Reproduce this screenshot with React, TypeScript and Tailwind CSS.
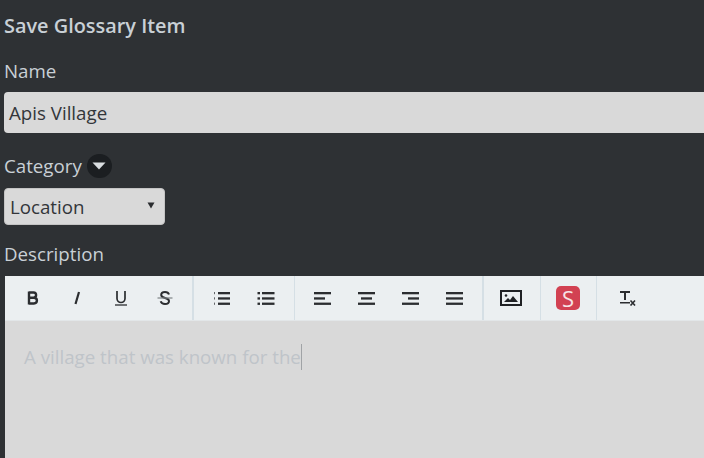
const font = "font-['Open_Sans',sans-serif]";

function Bars({ rows }: { rows: [number, number][] }) {
  return (
    <svg width="18" height="14" viewBox="0 0 18 14" fill="#2b2d30">
      {rows.map(([x, w], i) => (
        <rect key={i} x={x} y={1 + i * 5.3} width={w} height="2.3" />
      ))}
    </svg>
  );
}

function Tool({ children }: { children: React.ReactNode }) {
  return <div className="flex h-[44px] w-[44px] shrink-0 items-center justify-center">{children}</div>;
}

function Group({ children, className }: { children: React.ReactNode; className: string }) {
  return <div className={`flex h-[44px] shrink-0 border-[#d5dfe5] ${className}`}>{children}</div>;
}

export default function App() {
  return (
    <div className={`${font} h-[458px] w-[704px] overflow-hidden bg-[#2e3134] text-[#c9d0d6]`}>
      <div className="pl-1">
        <h1 className="pt-[13px] text-[19.9px] leading-[26px] font-semibold">Save Glossary Item</h1>

        <label className="mt-[19px] block text-[18.72px] leading-[26px]">Name</label>
        <div className="mt-[8px] flex h-[41px] w-[720px] items-center rounded-[4px] bg-[#d9d9d9] px-[5px] pt-[1px] text-[18.72px] text-[#33363a]">
          Apis Village
        </div>

        <div className="mt-[20px] flex h-[26px] items-center gap-[5px] text-[18.72px]">
          <span>Category</span>
          <span className="flex h-[24px] w-[25px] items-center justify-center rounded-full bg-[#1b1e21]">
            <svg width="14" height="8" viewBox="0 0 14 8" fill="#d9dde0">
              <path d="M0.5 0.5h13L7 7.5z" />
            </svg>
          </span>
        </div>
        <div className="mt-[9px] flex h-[37px] w-[161px] items-center justify-between rounded-[4px] border border-[#c4c4c4] bg-[#d9d9d9] pt-[1px] pr-[9px] pl-[5px] text-[18.72px] text-[#33363a]">
          <span>Location</span>
          <svg width="8" height="7" viewBox="0 0 8 7" fill="#2b2d30" className="mb-[3px]">
            <path d="M0.5 0.5h7L4 6.5z" />
          </svg>
        </div>

        <label className="mt-[16px] block text-[18.72px] leading-[26px]">Description</label>
      </div>

      <div className="mt-[9px] ml-[5px] w-[720px]">
        <div className="flex h-[45px] border-b border-[#e2e6e8] bg-[#ebeff1]">
          <Group className="border-r-2 pr-[5px] pl-[6px]">
            <Tool>
              <svg width="14" height="16" viewBox="0 0 14 16" fill="none" stroke="#2b2d30" strokeWidth="2.4">
                <path d="M3 1.5v13M3 2.5h4.5a2.6 2.6 0 0 1 0 5.2H3M3 7.7h5a2.9 2.9 0 0 1 0 5.8H3" />
              </svg>
            </Tool>
            <Tool>
              <svg width="14" height="16" viewBox="0 0 14 16" fill="none" stroke="#2b2d30" strokeWidth="2.2">
                <path d="M9 2L5.5 14" />
              </svg>
            </Tool>
            <Tool>
              <svg width="14" height="16" viewBox="0 0 14 16" fill="none" stroke="#2b2d30">
                <path d="M3 1v7.5a4 4 0 0 0 8 0V1" strokeWidth="1.7" />
                <path d="M1 15h12" strokeWidth="1.3" />
              </svg>
            </Tool>
            <Tool>
              <svg width="16" height="16" viewBox="0 0 16 16" fill="none">
                <path d="M12 4.5C11.5 3 10 2 8 2 5.8 2 4.2 3.2 4.2 5 4.2 9 12 7 12 11c0 1.8-1.7 3-4 3-2.2 0-3.8-1-4.3-2.7" stroke="#2b2d30" strokeWidth="2" />
                <path d="M0.5 8h15" stroke="#7d8285" strokeWidth="1.2" />
              </svg>
            </Tool>
          </Group>
          <Group className="border-r pr-[6px] pl-[6px]">
            <Tool>
              <svg width="18" height="14" viewBox="0 0 18 14" fill="#2b2d30">
                <rect x="1" y="1" width="1" height="2.2" opacity="0.7" />
                <rect x="1" y="6.3" width="1" height="2.2" opacity="0.7" />
                <rect x="1" y="11.6" width="1" height="2.2" opacity="0.7" />
                <rect x="5" y="1" width="12" height="2.3" />
                <rect x="5" y="6.3" width="12" height="2.3" />
                <rect x="5" y="11.6" width="12" height="2.3" />
              </svg>
            </Tool>
            <Tool>
              <svg width="18" height="14" viewBox="0 0 18 14" fill="#2b2d30">
                <rect x="0.5" y="1" width="2.5" height="2.3" />
                <rect x="0.5" y="6.3" width="2.5" height="2.3" />
                <rect x="0.5" y="11.6" width="2.5" height="2.3" />
                <rect x="5" y="1" width="12.5" height="2.3" />
                <rect x="5" y="6.3" width="12.5" height="2.3" />
                <rect x="5" y="11.6" width="12.5" height="2.3" />
              </svg>
            </Tool>
          </Group>
          <Group className="border-r-2 pr-[5px] pl-[6px]">
            <Tool><Bars rows={[[0, 17], [0, 11], [0, 17]]} /></Tool>
            <Tool><Bars rows={[[0, 17], [3, 11], [0, 17]]} /></Tool>
            <Tool><Bars rows={[[0, 17], [6, 11], [0, 17]]} /></Tool>
            <Tool><Bars rows={[[0, 17], [0, 17], [0, 17]]} /></Tool>
          </Group>
          <Group className="border-r pr-[7px] pl-[5px]">
            <Tool>
              <svg width="22" height="16" viewBox="0 0 22 16">
                <rect x="1" y="1" width="20" height="14" fill="#ebeff1" stroke="#1f2124" strokeWidth="2" />
                <circle cx="6" cy="5.5" r="1.3" fill="#1f2124" />
                <path d="M4 12l4-4 2 2 3-4 5 6z" fill="#1f2124" />
              </svg>
            </Tool>
          </Group>
          <Group className="border-r pr-[6px] pl-[5px]">
            <Tool>
              <span className="flex h-[24px] w-[24px] items-center justify-center rounded-[5px] bg-[#d24152] text-[22px] leading-none font-normal text-[#f6e4e6]">
                S
              </span>
            </Tool>
          </Group>
          <div className="flex h-[44px] w-[62px] shrink-0 items-center justify-center">
            <svg width="18" height="16" viewBox="0 0 18 16" fill="#2b2d30">
              <rect x="1" y="1" width="10" height="2" />
              <rect x="5" y="1" width="2" height="9" />
              <rect x="1" y="12" width="10" height="1.5" />
              <path d="M11.5 10.5l4.5 5M16 10.5l-4.5 5" stroke="#2b2d30" strokeWidth="1.6" fill="none" />
            </svg>
          </div>
        </div>

        <div className="flex h-[140px] items-start bg-[#d9d9d9] pt-[23px] pl-[19px] text-[18.72px] leading-[26px] text-[#bfc4c9]">
          <span className="border-r border-[#a0a3a6]">A village that was known for the</span>
        </div>
      </div>
    </div>
  );
}
